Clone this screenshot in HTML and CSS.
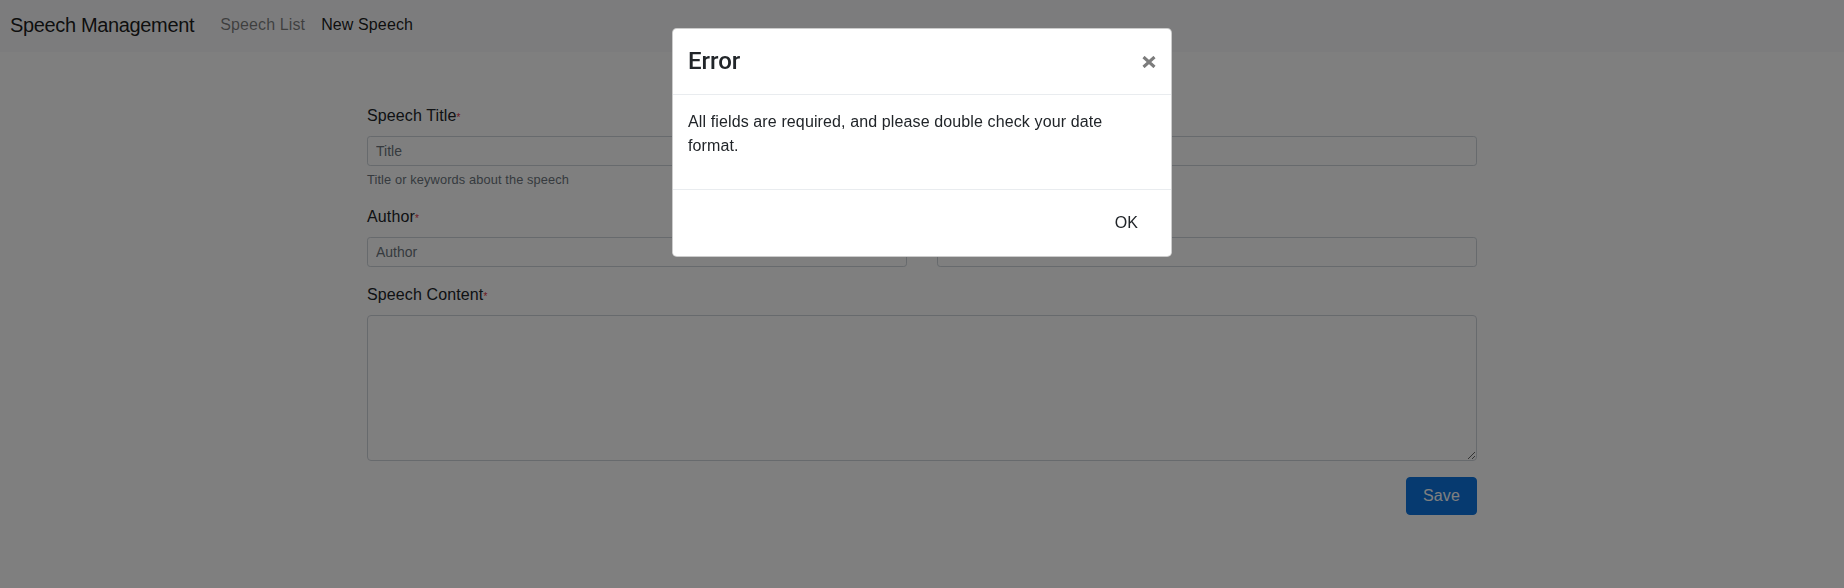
FILE: index.html
```html
<!DOCTYPE html>
<html lang="en">
<head>
<meta charset="utf-8">
<title>Speech Management</title>
<link rel="stylesheet" href="styles.css">
</head>
<body>
<nav class="navbar">
  <a class="brand" href="#">Speech Management</a>
  <ul class="nav">
    <li><a class="nav-link" href="#">Speech List</a></li>
    <li><a class="nav-link active" href="#">New Speech</a></li>
  </ul>
</nav>

<main class="container">
  <form class="speech-form">
    <div class="row">
      <div class="form-group">
        <label class="form-label">Speech Title<span class="req">*</span></label>
        <input class="input" type="text" placeholder="Title">
        <small class="help">Title or keywords about the speech</small>
      </div>
      <div class="form-group">
        <label class="form-label label-spacer"></label>
        <input class="input" type="text">
      </div>
    </div>
    <div class="row">
      <div class="form-group">
        <label class="form-label">Author<span class="req">*</span></label>
        <input class="input" type="text" placeholder="Author">
      </div>
      <div class="form-group">
        <label class="form-label label-spacer"></label>
        <input class="input" type="text">
      </div>
    </div>
    <div class="form-group">
      <label class="form-label">Speech Content<span class="req">*</span></label>
      <textarea class="input textarea"></textarea>
    </div>
    <div class="actions">
      <button class="btn-primary" type="button">Save</button>
    </div>
  </form>
</main>

<div class="modal-backdrop"></div>
<div class="modal">
  <div class="modal-dialog">
    <div class="modal-content">
      <div class="modal-header">
        <h4 class="modal-title">Error</h4>
        <button class="close" type="button" aria-label="Close">
          <svg width="14" height="12" viewBox="0 0 14 12" aria-hidden="true">
            <path d="M1.5 1 L12.5 11 M12.5 1 L1.5 11" stroke="#7c7c7c" stroke-width="3.1" fill="none"/>
          </svg>
        </button>
      </div>
      <div class="modal-body">
        <p>All fields are required, and please double check your date format.</p>
      </div>
      <div class="modal-footer">
        <button class="btn-ok" type="button">OK</button>
      </div>
    </div>
  </div>
</div>
</body>
</html>
```

FILE: styles.css
```css
html, body {
  margin: 0;
  padding: 0;
}

body {
  font-family: "Liberation Sans", Arial, sans-serif;
  font-size: 16px;
  line-height: 1.5;
  letter-spacing: 0.12px;
  color: #212529;
  background: #fff;
}

/* Navbar */
.navbar {
  display: flex;
  align-items: center;
  height: 52px;
  box-sizing: border-box;
  padding: 0 10px 2px;
  background: #f8f9fa;
}

.brand {
  font-size: 20px;
  line-height: 30px;
  letter-spacing: -0.35px;
  color: rgba(0, 0, 0, 0.9);
  text-decoration: none;
  margin-right: 18px;
}

.nav {
  display: flex;
  list-style: none;
  margin: 0;
  padding: 0;
}

.nav-link {
  display: block;
  padding: 0 8px;
  line-height: 24px;
  color: rgba(0, 0, 0, 0.5);
  text-decoration: none;
}

.nav-link.active {
  color: rgba(0, 0, 0, 0.9);
}

/* Form */
.container {
  max-width: 1110px;
  margin: 0 auto;
  padding: 52px 15px 0;
}

.row {
  display: grid;
  grid-template-columns: 1fr 1fr;
  column-gap: 30px;
}

.form-group {
  margin-bottom: 16px;
}

.form-label {
  display: block;
  margin-bottom: 8px;
  line-height: 24px;
}

.label-spacer {
  height: 24px;
}

.req {
  color: #dc3545;
  font-size: 10px;
  line-height: 1;
}

.input {
  display: block;
  width: 100%;
  box-sizing: border-box;
  height: 30px;
  padding: 4px 8px;
  font-family: inherit;
  font-size: 14px;
  line-height: 20px;
  color: #495057;
  background: #fff;
  border: 1px solid #ced4da;
  border-radius: 3.2px;
  margin: 0;
}

.input::placeholder {
  color: #6c757d;
  opacity: 1;
}

.textarea {
  height: 146px;
  border-radius: 4px;
  font-size: 16px;
  resize: vertical;
}

.help {
  display: block;
  margin-top: 4px;
  font-size: 12.8px;
  line-height: 19.2px;
  color: #6c757d;
}

.actions {
  display: flex;
  justify-content: flex-end;
}

.btn-primary {
  height: 38px;
  padding: 0 16px;
  font-family: inherit;
  font-size: 16px;
  letter-spacing: 0.12px;
  color: #fff;
  background: #0d75e0;
  border: 1px solid #0d75e0;
  border-radius: 4px;
}

/* Modal */
.modal-backdrop {
  position: fixed;
  inset: 0;
  background: #000;
  opacity: 0.5;
}

.modal {
  position: fixed;
  inset: 0;
  overflow: hidden;
}

.modal-dialog {
  width: 500px;
  margin: 28px auto 0;
}

.modal-content {
  background: #fff;
  border: 1px solid rgba(0, 0, 0, 0.2);
  border-radius: 4.8px;
}

.modal-header {
  display: flex;
  align-items: center;
  justify-content: space-between;
  padding: 15px;
  border-bottom: 1px solid #e9ecef;
}

.modal-title {
  margin: 0;
  font-family: Roboto, "Liberation Sans", sans-serif;
  font-weight: 500;
  font-size: 24px;
  line-height: 35px;
  letter-spacing: 0;
  color: #212529;
}

.close {
  display: flex;
  padding: 0;
  margin: 0;
  border: 0;
  background: none;
}

.modal-body {
  padding: 15px;
}

.modal-body p {
  margin: 0 0 16px;
}

.modal-footer {
  display: flex;
  justify-content: flex-end;
  padding: 15px;
  border-top: 1px solid #e9ecef;
}

.btn-ok {
  height: 36px;
  padding: 0 17px 0 16px;
  font-family: inherit;
  font-size: 16px;
  letter-spacing: 0.12px;
  color: #212529;
  background: none;
  border: 1px solid transparent;
  border-radius: 4px;
}
```
